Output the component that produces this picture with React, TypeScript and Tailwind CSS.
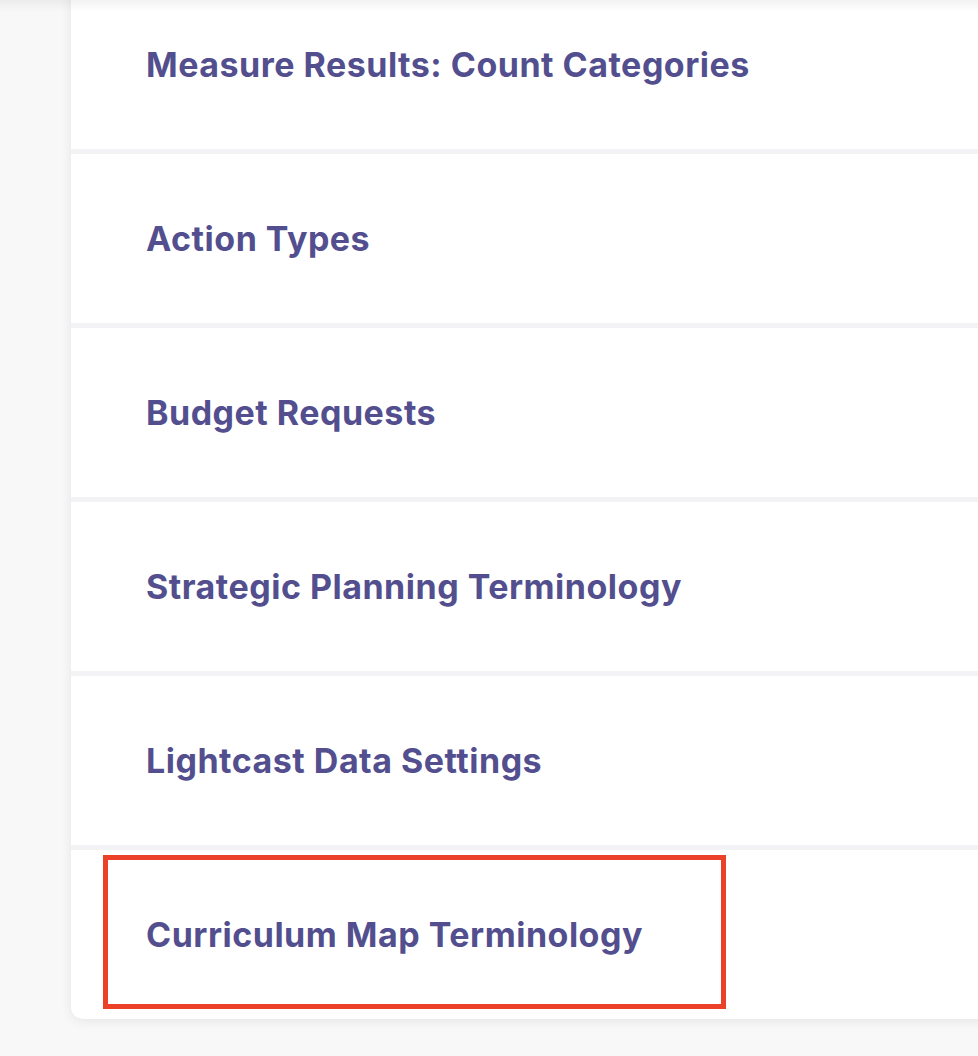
const items = [
  'Measure Results: Count Categories',
  'Action Types',
  'Budget Requests',
  'Strategic Planning Terminology',
  'Lightcast Data Settings',
  'Curriculum Map Terminology',
]

export default function App() {
  return (
    <div className="relative h-[1056px] w-[978px] overflow-hidden bg-[#f8f8f8] font-['Inter',sans-serif]">
      <div className="pointer-events-none absolute inset-x-0 top-0 z-10 h-3 bg-gradient-to-b from-black/5 to-transparent" />
      <div className="-mt-[21px] ml-[71px] w-[940px] overflow-hidden rounded-b-xl bg-white shadow-[0_2px_12px_rgba(0,0,0,0.08)]">
        {items.map((label, i) => {
          const last = i === items.length - 1
          return (
            <div
              key={label}
              className={`relative flex items-center pl-[75px] ${
                i === 0 ? 'h-[170px]' : 'h-[174px] border-t-[5px] border-[#f3f3f5]'
              } ${last ? 'h-[173px]' : ''}`}
            >
              <span className="text-[34px] font-bold tracking-[0.5px] text-[#534f8f]">
                {label}
              </span>
              {last && (
                <div className="absolute left-[32px] top-[5px] h-[154px] w-[623px] border-[5px] border-[#ea4128]" />
              )}
            </div>
          )
        })}
      </div>
    </div>
  )
}
